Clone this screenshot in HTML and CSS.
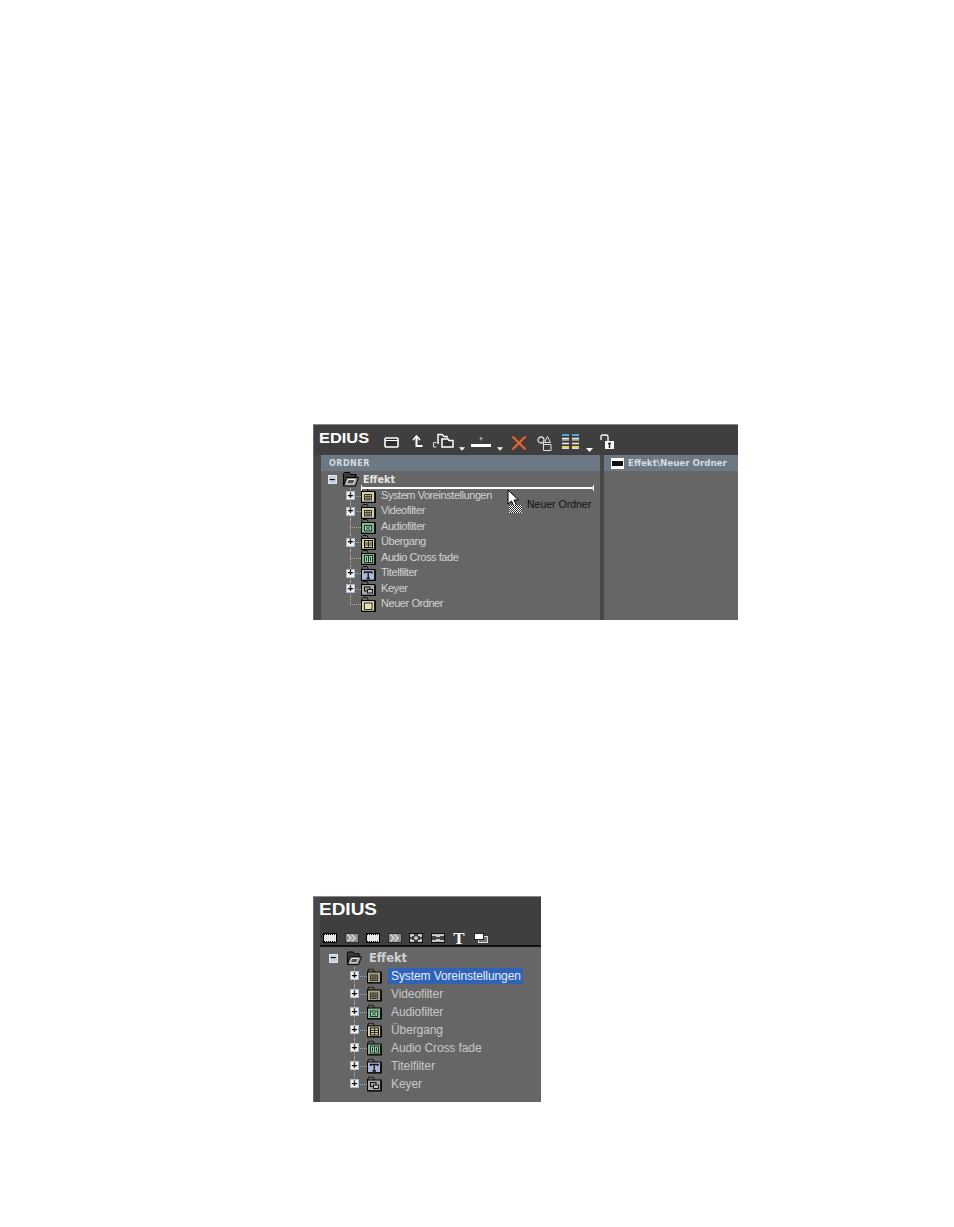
FILE: index.html
```html
<!DOCTYPE html>
<html lang="de">
<head>
    <meta charset="UTF-8">
    <meta name="viewport" content="width=device-width, initial-scale=1.0">
    <title>EDIUS Effekt Ordner</title>
    <link rel="stylesheet" href="styles.css">
</head>
<body>
    <svg class="defs" width="0" height="0" aria-hidden="true">
        <defs>
            <pattern id="checker" width="2" height="2" patternUnits="userSpaceOnUse">
                <rect width="2" height="2" fill="#fff"/>
                <rect width="1" height="1" fill="#222"/>
                <rect x="1" y="1" width="1" height="1" fill="#222"/>
            </pattern>
        </defs>
        <symbol id="f-base" viewBox="0 0 15 15">
            <path d="M1 4V1.500L2 .5h4l1.500 3" fill="none" stroke="#111"/>
            <rect x="0.500" y="3.500" width="13.500" height="11" fill="currentColor" stroke="#000"/>
            <path d="M14 4v10.500H1" fill="none" stroke="#000" stroke-width="1.500"/>
        </symbol>
        <symbol id="f-grid" viewBox="0 0 15 15">
            <use href="#f-base" width="15" height="15"/>
            <rect x="3.500" y="6.500" width="7" height="5.500" fill="none" stroke="#333"/>
            <path d="M3.500 8.500h7M3.500 10.200h7M6 6.500V12M8 6.500V12" stroke="#333" stroke-width=".8"/>
        </symbol>
        <symbol id="f-sound" viewBox="0 0 15 15">
            <use href="#f-base" width="15" height="15"/>
            <rect x="3.500" y="6.500" width="7" height="5.500" fill="#a8cdb0" stroke="#1c3a28"/>
            <path d="M5 7.500l4 3.500M9 7.500l-4 3.500" stroke="#1c3a28"/>
        </symbol>
        <symbol id="f-split" viewBox="0 0 15 15">
            <use href="#f-base" width="15" height="15"/>
            <rect x="3.500" y="5.500" width="8" height="7" fill="none" stroke="#111"/>
            <path d="M7.500 5.500v7M3.500 8h8M3.500 10h8" stroke="#111" stroke-width=".8"/>
        </symbol>
        <symbol id="f-cross" viewBox="0 0 15 15">
            <use href="#f-base" width="15" height="15"/>
            <rect x="3.500" y="5.500" width="8" height="7" fill="#a8cdb0" stroke="#1c3a28"/>
            <path d="M7.500 5.500v7M5.500 7v4M9.500 7v4" stroke="#1c3a28"/>
        </symbol>
        <symbol id="f-title" viewBox="0 0 15 15">
            <use href="#f-base" width="15" height="15"/>
            <path d="M3.500 7.500V6h7.500v1.500M7.200 6v6M5.500 12.500h3.500" fill="none" stroke="#111" stroke-width="1.300"/>
        </symbol>
        <symbol id="f-keyer" viewBox="0 0 15 15">
            <use href="#f-base" width="15" height="15"/>
            <rect x="3.500" y="6" width="5.500" height="4" fill="none" stroke="#111"/>
            <rect x="6.500" y="8.500" width="5" height="3.500" fill="#c8c8c8" stroke="#111"/>
        </symbol>
        <symbol id="f-plain" viewBox="0 0 15 15">
            <use href="#f-base" width="15" height="15"/>
            <rect x="3.500" y="6" width="7.500" height="6.500" fill="#e4deba" stroke="#333"/>
        </symbol>
        <symbol id="f-open" viewBox="0 0 17 15">
            <path d="M1.500 13.500v-12l1-1h5l1.500 2h5v3" fill="#3a3a3a" stroke="#000"/>
            <path d="M1.500 14l3-8.500h12l-3 8.500z" fill="#8a8a8a" stroke="#000"/>
            <path d="M6 7.500h7l-1.500 4.500h-7z" fill="#555" stroke="#f0f0f0"/>
        </symbol>
        <symbol id="i-film" viewBox="0 0 14 10">
            <rect x="0.500" y="0.500" width="13" height="9" fill="#e8e8e8" stroke="#000"/>
            <path d="M1 1.500h12M1 8.500h12" stroke="#000" stroke-dasharray="1 1"/>
        </symbol>
        <symbol id="i-chev" viewBox="0 0 14 10">
            <rect x="0.500" y="0.500" width="13" height="9" fill="#8e8e8e" stroke="#2c2c2c"/>
            <path d="M2.500 1.500L6 5 2.500 8.500M6.500 1.500L10 5 6.500 8.500" fill="none" stroke="#d8d8d8" stroke-width="1.600"/>
        </symbol>
        <symbol id="i-in" viewBox="0 0 14 10">
            <rect x="0.500" y="0.500" width="13" height="9" fill="#444" stroke="#111"/>
            <path d="M2 4V2h3M9 2h3v2M2 6v2h3M9 8h3V6" fill="none" stroke="#eee" stroke-width="1.500"/>
            <rect x="5.500" y="3.500" width="3" height="3" fill="#ddd"/>
        </symbol>
        <symbol id="i-out" viewBox="0 0 14 10">
            <rect x="0.500" y="0.500" width="13" height="9" fill="#444" stroke="#111"/>
            <path d="M1 2h5v2M13 2H8v2M1 8h5V6M13 8H8V6" fill="none" stroke="#eee" stroke-width="1.500"/>
        </symbol>
        <symbol id="i-stack" viewBox="0 0 14 10">
            <rect x="4.500" y="3.500" width="9" height="6" fill="#777" stroke="#ddd"/>
            <rect x="0.500" y="0.500" width="9" height="6" fill="#fff" stroke="#222"/>
        </symbol>
        <symbol id="caret" viewBox="0 0 7 4">
            <path d="M0 0h7L3.500 4z" fill="#fff"/>
        </symbol>
    </svg>

    <section class="win win-top">
        <div class="titlebar">
            <b class="logo">EDIUS</b>
            <div class="tools">
                <svg class="t-folder" width="15" height="11" viewBox="0 0 15 11"><rect x="1" y="1" width="13" height="9" rx="1" fill="#2e2e2e" stroke="#fff" stroke-width="1.600"/><path d="M1 3.500h13" stroke="#fff"/></svg>
                <svg class="t-up" width="11" height="12" viewBox="0 0 11 12"><path d="M1 5l3.500-4L8 5" fill="none" stroke="#fff" stroke-width="1.600"/><path d="M4.500 2v9h6" fill="none" stroke="#fff" stroke-width="2"/></svg>
                <svg class="t-copy" width="21" height="15" viewBox="0 0 21 15"><path d="M.500 14V9.500h3M.500 14h3" fill="none" stroke="#ddd"/><path d="M5 11V1.500h4l2 2h3V5" fill="none" stroke="#fff" stroke-width="1.500"/><path d="M9 14V6h6l1 1.500h4V14z" fill="#333" stroke="#fff" stroke-width="1.500"/></svg>
                <svg class="caret" width="6" height="4"><use href="#caret"/></svg>
                <svg class="t-line" width="20" height="12" viewBox="0 0 20 12"><path d="M0 9.500h20" stroke="#fff" stroke-width="3"/><path d="M10 1v3.500M8.500 2.500h3" stroke="#bbb"/></svg>
                <svg class="caret c2" width="6" height="4"><use href="#caret"/></svg>
                <svg class="t-x" width="16" height="16" viewBox="0 0 16 16"><path d="M1.500 1.500l13 13M14.500 1.500l-13 13" stroke="#e8652c" stroke-width="2.200"/></svg>
                <svg class="t-fx" width="15" height="15" viewBox="0 0 15 15"><circle cx="4" cy="4" r="3" fill="none" stroke="#ddd" stroke-width="1.300"/><path d="M10.500.5l3 6h-6zM6 8.500h8v6H6.500" fill="none" stroke="#ddd"/><path d="M6.500 7v7.500" stroke="#ddd"/></svg>
                <svg class="t-grid" width="17" height="15" viewBox="0 0 17 15">
                    <path d="M0 1h7M10 1h7" stroke="#4aa8e0" stroke-width="2"/>
                    <path d="M0 4.500h7M10 4.500h7M0 9.500h7M10 9.500h7" stroke="#f0f0e0" stroke-width="1.500"/>
                    <path d="M0 13h7M10 13h7" stroke="#e8d460" stroke-width="2"/>
                    <path d="M0 6h7M10 6h7M0 14.500h7M10 14.500h7" stroke="#ddd"/>
                </svg>
                <svg class="caret c3" width="7" height="4"><use href="#caret"/></svg>
                <svg class="t-lock" width="14" height="15" viewBox="0 0 14 15"><path d="M1 6V2.500Q1 1 3 1h3Q8 1 8 2.500V7" fill="none" stroke="#fff" stroke-width="1.300"/><rect x="5" y="7" width="9" height="8" fill="#fff"/><path d="M9.500 9v5M8 9.500h3" stroke="#222" stroke-width="1.500"/></svg>
            </div>
        </div>
        <div class="panes">
            <div class="pane pane-left">
                <div class="pane-head">ORDNER</div>
                <ul class="tree">
                    <li class="row root"><i class="tgl">&minus;</i><svg class="open" width="17" height="15"><use href="#f-open"/></svg><b>Effekt</b></li>
                    <li class="row"><span class="branch"><i class="tgl">+</i></span><svg class="fld cream" width="15" height="15"><use href="#f-grid"/></svg><span>System Voreinstellungen</span></li>
                    <li class="row"><span class="branch"><i class="tgl">+</i></span><svg class="fld cream" width="15" height="15"><use href="#f-grid"/></svg><span>Videofilter</span></li>
                    <li class="row"><span class="branch"></span><svg class="fld green" width="15" height="15"><use href="#f-sound"/></svg><span>Audiofilter</span></li>
                    <li class="row"><span class="branch"><i class="tgl">+</i></span><svg class="fld cream" width="15" height="15"><use href="#f-split"/></svg><span>Übergang</span></li>
                    <li class="row"><span class="branch"></span><svg class="fld green" width="15" height="15"><use href="#f-cross"/></svg><span>Audio Cross fade</span></li>
                    <li class="row"><span class="branch"><i class="tgl">+</i></span><svg class="fld blue" width="15" height="15"><use href="#f-title"/></svg><span>Titelfilter</span></li>
                    <li class="row"><span class="branch"><i class="tgl">+</i></span><svg class="fld grey" width="15" height="15"><use href="#f-keyer"/></svg><span>Keyer</span></li>
                    <li class="row last"><span class="branch"></span><svg class="fld cream" width="15" height="15"><use href="#f-plain"/></svg><span>Neuer Ordner</span></li>
                </ul>
                <div class="dropline"></div>
                <div class="drag">
                    <svg width="16" height="25" viewBox="0 0 16 25"><path d="M1 1v14l3.500-3 2.500 5.500 2.500-1L7 11h4.500z" fill="#fff" stroke="#000"/><rect x="2" y="16" width="13" height="8" fill="url(#checker)"/></svg>
                    <span>Neuer Ordner</span>
                </div>
            </div>
            <div class="pane pane-right">
                <div class="pane-head path">
                    <svg width="13" height="11" viewBox="0 0 13 11"><rect width="13" height="11" fill="#fff"/><rect x="1" y="3" width="11" height="5" fill="#111"/></svg>
                    <span>Effekt\Neuer Ordner</span>
                </div>
            </div>
        </div>
    </section>

    <section class="win win-bottom">
        <div class="titlebar">
            <b class="logo">EDIUS</b>
            <div class="tools small">
                <svg width="14" height="10"><use href="#i-film"/></svg>
                <svg width="14" height="10"><use href="#i-chev"/></svg>
                <svg width="14" height="10"><use href="#i-film"/></svg>
                <svg width="14" height="10"><use href="#i-chev"/></svg>
                <svg width="14" height="10"><use href="#i-in"/></svg>
                <svg width="14" height="10"><use href="#i-out"/></svg>
                <span class="t-glyph">T</span>
                <svg width="14" height="10"><use href="#i-stack"/></svg>
            </div>
        </div>
        <ul class="tree">
            <li class="row root"><i class="tgl">&minus;</i><svg class="open" width="16" height="17" preserveAspectRatio="none"><use href="#f-open"/></svg><b>Effekt</b></li>
            <li class="row"><span class="branch"><i class="tgl">+</i></span><svg class="fld cream dim" width="15" height="16"><use href="#f-grid"/></svg><span class="sel">System Voreinstellungen</span></li>
            <li class="row"><span class="branch"><i class="tgl">+</i></span><svg class="fld cream dim" width="15" height="16"><use href="#f-grid"/></svg><span>Videofilter</span></li>
            <li class="row"><span class="branch"><i class="tgl">+</i></span><svg class="fld green" width="15" height="16"><use href="#f-sound"/></svg><span>Audiofilter</span></li>
            <li class="row"><span class="branch"><i class="tgl">+</i></span><svg class="fld cream" width="15" height="16"><use href="#f-split"/></svg><span>Übergang</span></li>
            <li class="row"><span class="branch"><i class="tgl">+</i></span><svg class="fld green" width="15" height="16"><use href="#f-cross"/></svg><span>Audio Cross fade</span></li>
            <li class="row"><span class="branch"><i class="tgl">+</i></span><svg class="fld blue" width="15" height="16"><use href="#f-title"/></svg><span>Titelfilter</span></li>
            <li class="row last"><span class="branch"><i class="tgl">+</i></span><svg class="fld grey" width="15" height="16"><use href="#f-keyer"/></svg><span>Keyer</span></li>
        </ul>
    </section>
</body>
</html>
```

FILE: styles.css
```css
body {
    background-color: #fff;
    margin: 0;
    padding: 424px 0 0 313px;
    font-family: "Liberation Sans", Arial, sans-serif;
}
.defs {
    position: absolute;
}
.win {
    display: flex;
    flex-direction: column;
    box-sizing: border-box;
    background: #484848;
    border-top: 1px solid #8a8a8a;
    border-left: 1px solid #6a6a6a;
}
.win-top {
    width: 425px;
    height: 196px;
}
.win-bottom {
    width: 228px;
    height: 206px;
    margin-top: 276px;
}
.titlebar {
    background: #3f3f3f;
    color: #fff;
}
.logo {
    display: block;
    line-height: 17px;
    transform-origin: left;
}
.tools {
    display: flex;
    align-items: flex-start;
}

/* top window */
.win-top .titlebar {
    display: flex;
    height: 30px;
    flex-shrink: 0;
}
.win-top .logo {
    width: 65px;
    margin: 5px 0 0 5px;
    font-size: 14px;
    transform: scaleX(1.170);
}
.win-top .tools {
    padding-top: 8px;
}
.t-folder { margin-top: 4px; }
.t-up { margin: 2px 0 0 13px; }
.t-copy { margin-left: 10px; }
.caret { margin: 14px 0 0 5px; }
.t-line { margin: 3px 0 0 6px; }
.caret.c2 { margin-left: 6px; }
.t-x { margin: 2px 0 0 8px; }
.t-fx { margin: 3px 0 0 10px; }
.t-grid { margin: 1px 0 0 10px; }
.caret.c3 { margin: 15px 0 0 7px; }
.t-lock { margin: 1px 0 0 7px; }

.panes {
    flex: 1;
    display: flex;
    padding-left: 7px;
    gap: 4px;
}
.pane {
    background: #666;
    position: relative;
}
.pane-left { width: 279px; }
.pane-right { flex: 1; }
.pane-head {
    height: 16px;
    line-height: 17px;
    background: #6c7884;
    color: #d6dbe0;
    font-family: "DejaVu Sans", sans-serif;
    font-size: 8px;
    font-weight: bold;
    letter-spacing: 0.5px;
    padding-left: 8px;
}
.path {
    display: flex;
    align-items: center;
    gap: 4px;
    padding-left: 7px;
    font-size: 8.700px;
    letter-spacing: 0;
}
.tree {
    list-style: none;
    margin: 0;
    padding: 0;
    color: #d2d2d2;
    font-size: 11px;
    letter-spacing: -0.440px;
}
.row {
    display: flex;
    align-items: center;
    height: 15.500px;
    padding-left: 29px;
    white-space: nowrap;
}
.row > span:last-child {
    margin-bottom: 2px;
}
.root {
    height: 17px;
    padding-left: 7px;
}
.root b {
    font-family: "DejaVu Sans", sans-serif;
    font-size: 9.700px;
    letter-spacing: 0;
    margin-left: 4px;
    color: #e4e4e4;
}
.open { margin-left: 5px; flex-shrink: 0; }
.branch {
    position: relative;
    align-self: stretch;
    width: 11px;
    flex-shrink: 0;
}
.branch::before {
    content: "";
    position: absolute;
    left: 0;
    top: 0;
    bottom: 0;
    border-left: 1px dotted #b8b090;
}
.branch::after {
    content: "";
    position: absolute;
    left: 0;
    right: 0;
    top: 50%;
    border-top: 1px dotted #b8b090;
}
.last .branch::before {
    bottom: 50%;
}
.tgl {
    box-sizing: border-box;
    width: 9px;
    height: 9px;
    flex-shrink: 0;
    display: flex;
    align-items: center;
    justify-content: center;
    background: #f2f2ee;
    border: 1px solid #a6bcd6;
    color: #000;
    font: bold 10px/1 "Liberation Sans", sans-serif;
    letter-spacing: 0;
}
.root .tgl {
    background: #c6d0dc;
    border-color: #e4e8ee;
}
.branch .tgl {
    position: absolute;
    left: -4px;
    top: 3px;
    z-index: 1;
}
.fld { flex-shrink: 0; margin-right: 5px; }
.cream { color: #d6cfa8; }
.green { color: #86b596; }
.blue { color: #aab8da; }
.grey { color: #a8a8a8; }
.dim { color: #a9a181; }
.dropline {
    position: absolute;
    left: 40px;
    top: 32px;
    width: 233px;
    height: 2px;
    background: #fff;
}
.dropline::before,
.dropline::after {
    content: "";
    position: absolute;
    top: -2px;
    width: 1px;
    height: 6px;
    background: #fff;
}
.dropline::before { left: 0; }
.dropline::after { right: 0; }
.drag {
    position: absolute;
    left: 186px;
    top: 34px;
    display: flex;
    gap: 4px;
    color: #111;
    font-size: 10.500px;
}
.drag span {
    margin-top: 9px;
}

/* bottom window */
.win-bottom .titlebar {
    height: 50px;
    flex-shrink: 0;
    border-bottom: 2px solid #111;
    box-sizing: border-box;
    margin-left: 6px;
}
.win-bottom .logo {
    margin: 4px 0 0 -1px;
    font-size: 16.500px;
    transform: scaleX(1.150);
}
.small {
    gap: 7.500px;
    margin-top: 15px;
    padding-left: 3px;
}
.t-glyph {
    width: 14px;
    text-align: center;
    font: bold 17px/11px "Liberation Serif", serif;
    color: #fff;
}
.win-bottom .tree {
    flex: 1;
    margin-left: 6px;
    background: #666;
    font-size: 12px;
    letter-spacing: -0.100px;
    padding-top: 2px;
    color: #c8c8c8;
}
.win-bottom .row {
    height: 18px;
    padding-left: 34px;
}
.win-bottom .row > span:last-child {
    margin-bottom: 0;
}
.win-bottom .root {
    padding-left: 9px;
}
.win-bottom .root b {
    font-size: 11.500px;
    margin-left: 7px;
    color: #d0d0d0;
}
.win-bottom .open { margin-left: 8px; }
.win-bottom .branch {
    width: 13px;
}
.win-bottom .branch::before,
.win-bottom .branch::after {
    border-color: #a8a8a8;
}
.win-bottom .branch .tgl {
    top: 4px;
}
.win-bottom .fld { margin-right: 9px; }
.sel {
    background: #2f62b8;
    color: #e8eefc;
    line-height: 16px;
    padding: 0 2px 0 3px;
    margin-left: -3px;
}
```
